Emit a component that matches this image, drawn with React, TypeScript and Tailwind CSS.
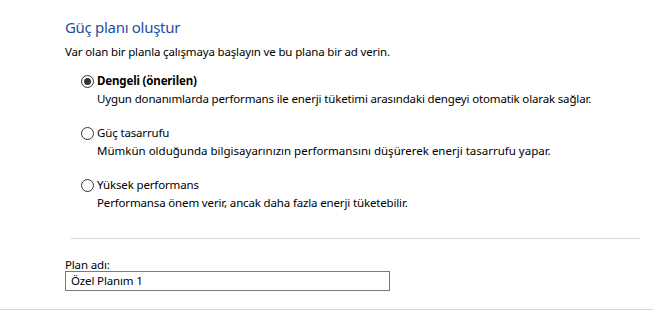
import React from "react";

const font = { fontFamily: '"Segoe UI", "Noto Sans", sans-serif' };

function Radio({ checked }: { checked?: boolean }) {
  return (
    <span className="mt-[2px] flex h-[13px] w-[13px] shrink-0 items-center justify-center rounded-full border border-[#333333] bg-white">
      {checked && <span className="h-[7px] w-[7px] rounded-full bg-[#333333]" />}
    </span>
  );
}

const options = [
  {
    label: "Dengeli (önerilen)",
    desc: "Uygun donanımlarda performans ile enerji tüketimi arasındaki dengeyi otomatik olarak sağlar.",
    checked: true,
    descClass: "",
  },
  {
    label: "Güç tasarrufu",
    desc: "Mümkün olduğunda bilgisayarınızın performansını düşürerek enerji tasarrufu yapar.",
    descClass: "tracking-normal",
  },
  {
    label: "Yüksek performans",
    desc: "Performansa önem verir, ancak daha fazla enerji tüketebilir.",
    descClass: "",
  },
];

export default function App() {
  return (
    <div
      className="h-[316px] w-[653px] overflow-hidden bg-white text-[11.5px] tracking-[-0.15px] text-black"
      style={font}
    >
      <div className="pl-[65px] pt-[16px]">
        <h1 className="text-[15px] leading-[22px] font-normal tracking-[-0.3px] text-[#1d4fa0]">
          Güç planı oluştur
        </h1>
        <p className="mt-[6px] leading-[16px]">
          Var olan bir planla çalışmaya başlayın ve bu plana bir ad verin.
        </p>
        <div className="mt-[13px] flex flex-col gap-[17px] pl-[16px]">
          {options.map((o) => (
            <div key={o.label} className="flex flex-col">
              <label className="flex h-[17px] items-start gap-[3px] leading-[15px]">
                <Radio checked={o.checked} />
                <span className={o.checked ? "font-bold" : ""}>{o.label}</span>
              </label>
              <p className={`pl-[16px] leading-[18px] ${o.descClass}`}>{o.desc}</p>
            </div>
          ))}
        </div>
        <div className="ml-[6px] mt-[26px] h-px w-[569px] bg-[#d6d6d6]" />
        <div className="mt-[20px] leading-[12px]">Plan adı:</div>
        <div className="flex h-[20px] w-[325px] items-center border border-[#7a7a7a] pl-[5px]">
          Özel Planım 1
        </div>
      </div>
      <div className="mt-[18px] h-px w-full bg-[#d6d6d6]" />
    </div>
  );
}
